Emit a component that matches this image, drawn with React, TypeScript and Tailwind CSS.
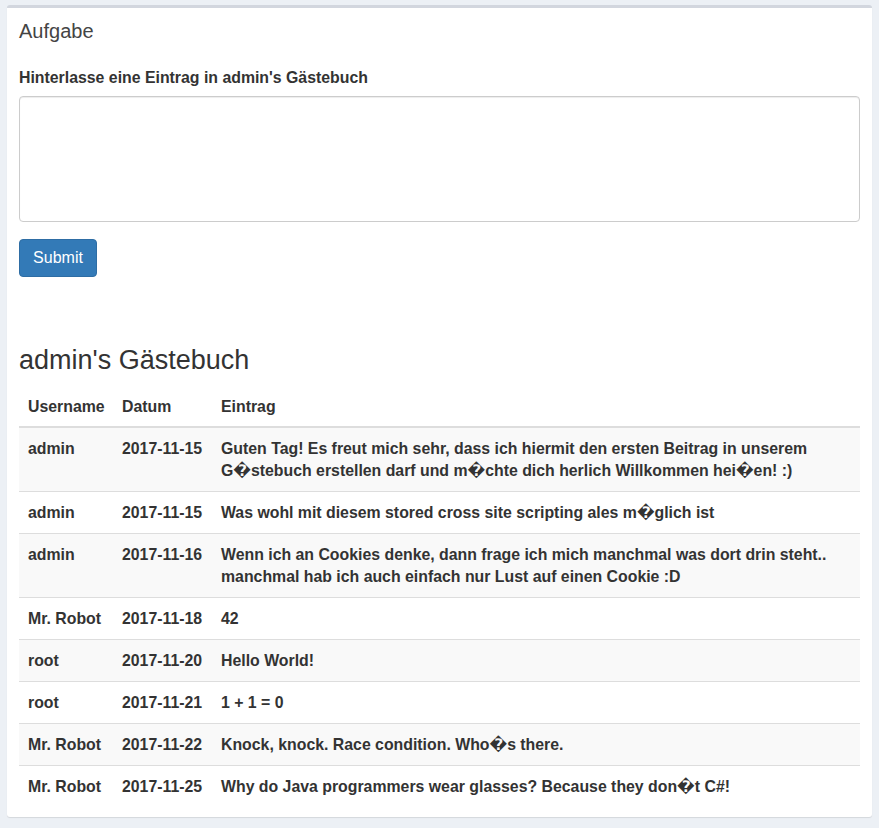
const rows = [
  {
    user: "admin",
    date: "2017-11-15",
    text: "Guten Tag! Es freut mich sehr, dass ich hiermit den ersten Beitrag in unserem G\uFFFDstebuch erstellen darf und m\uFFFDchte dich herlich Willkommen hei\uFFFDen! :)",
  },
  { user: "admin", date: "2017-11-15", text: "Was wohl mit diesem stored cross site scripting ales m\uFFFDglich ist" },
  {
    user: "admin",
    date: "2017-11-16",
    text: "Wenn ich an Cookies denke, dann frage ich mich manchmal was dort drin steht.. manchmal hab ich auch einfach nur Lust auf einen Cookie :D",
  },
  { user: "Mr. Robot", date: "2017-11-18", text: "42" },
  { user: "root", date: "2017-11-20", text: "Hello World!" },
  { user: "root", date: "2017-11-21", text: "1 + 1 = 0" },
  { user: "Mr. Robot", date: "2017-11-22", text: "Knock, knock. Race condition. Who\uFFFDs there." },
  { user: "Mr. Robot", date: "2017-11-25", text: "Why do Java programmers wear glasses? Because they don\uFFFDt C#!" },
];

export default function App() {
  return (
    <div
      className="min-h-[828px] bg-[#ecf0f5] pt-[5px] pb-[10px] pl-[7px] pr-[7px] text-[#333]"
      style={{ fontFamily: '"Liberation Sans", Arial, "DejaVu Sans", sans-serif' }}
    >
      <div className="rounded-[3px] border-t-[3px] border-[#d2d6de] bg-white shadow-[0_1px_1px_rgba(0,0,0,0.1)]">
        <div className="px-[12px] pt-[11px] pb-[5px]">
          <h3 className="text-[20px] leading-[24px] text-[#444]">Aufgabe</h3>
        </div>
        <div className="px-[12px] pb-[10px]">
          <label className="mt-[19px] block text-[15.85px] font-bold leading-[22px]">
            Hinterlasse eine Eintrag in admin's Gästebuch
          </label>
          <textarea className="mt-[7px] block h-[126px] w-full resize-none rounded-[4px] border border-[#ccc] shadow-[inset_0_1px_1px_rgba(0,0,0,0.075)] outline-none" />
          <button className="mt-[17px] h-[38px] w-[78px] rounded-[4px] border border-[#2e6da4] bg-[#337ab7] text-[16px] text-white">
            Submit
          </button>

          <h2 className="mt-[66px] text-[27px] leading-[34px] text-[#333]">admin's Gästebuch</h2>

          <table className="mt-[9px] w-full border-collapse text-[15.85px] font-bold leading-[22px]">
            <thead>
              <tr className="border-b-2 border-[#ddd]">
                <th className="w-[94px] pl-[9px] pt-[10px] pb-[8px] text-left">Username</th>
                <th className="w-[99px] pl-[9px] pt-[10px] pb-[8px] text-left">Datum</th>
                <th className="pl-[9px] pt-[10px] pb-[8px] text-left">Eintrag</th>
              </tr>
            </thead>
            <tbody>
              {rows.map((r, i) => (
                <tr key={i} className={`border-t border-[#ddd] ${i % 2 === 0 ? "bg-[#f9f9f9]" : "bg-white"}`}>
                  <td className="pl-[9px] pt-[10px] pb-[9px] align-top">{r.user}</td>
                  <td className="pl-[9px] pt-[10px] pb-[9px] align-top">{r.date}</td>
                  <td className="pl-[9px] pr-[9px] pt-[10px] pb-[9px] align-top">{r.text}</td>
                </tr>
              ))}
            </tbody>
          </table>
        </div>
      </div>
    </div>
  );
}
